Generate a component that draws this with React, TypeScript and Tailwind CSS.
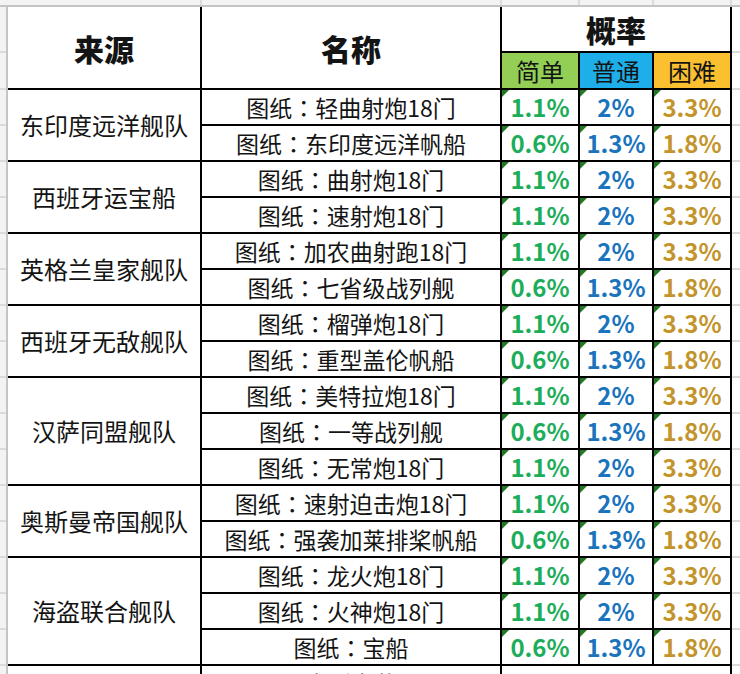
const rateA = ["1.1%", "2%", "3.3%"];
const rateB = ["0.6%", "1.3%", "1.8%"];

const groups: { name: string; items: [string, string[]][] }[] = [
  { name: "东印度远洋舰队", items: [["轻曲射炮18门", rateA], ["东印度远洋帆船", rateB]] },
  { name: "西班牙运宝船", items: [["曲射炮18门", rateA], ["速射炮18门", rateA]] },
  { name: "英格兰皇家舰队", items: [["加农曲射跑18门", rateA], ["七省级战列舰", rateB]] },
  { name: "西班牙无敌舰队", items: [["榴弹炮18门", rateA], ["重型盖伦帆船", rateB]] },
  {
    name: "汉萨同盟舰队",
    items: [
      ["美特拉炮18门", rateA],
      ["一等战列舰", rateB],
      ["无常炮18门", rateA],
    ],
  },
  { name: "奥斯曼帝国舰队", items: [["速射迫击炮18门", rateA], ["强袭加莱排桨帆船", rateB]] },
  {
    name: "海盗联合舰队",
    items: [
      ["龙火炮18门", rateA],
      ["火神炮18门", rateA],
      ["宝船", rateB],
    ],
  },
];

const valueColors = ["text-[#1cad5b]", "text-[#1a74bd]", "text-[#c3942a]"];
const rowCount = 19;

// 图纸：xxx, colon drawn centred like the sheet's font
function Blueprint({ name }: { name: string }) {
  return (
    <span>
      图纸<span className="font-['Noto_Sans_CJK_TC',sans-serif]">：</span>
      {name}
    </span>
  );
}

function Value({ text, color }: { text: string; color: string }) {
  return (
    <div className="relative flex items-center justify-center bg-white">
      <span className="absolute left-0 top-0 h-0 w-0 border-t-[7px] border-r-[7px] border-t-[#1e7b22] border-r-transparent" />
      <span className={`text-[24px] font-bold leading-none ${color}`}>{text}</span>
    </div>
  );
}

function MarginStrip({ cellClass }: { cellClass: string }) {
  return (
    <div className="grid grid-rows-[44px_35px_repeat(17,34px)] gap-[2px] bg-[#dadada]">
      {Array.from({ length: rowCount }).map((_, i) => (
        <div key={i} className={cellClass} />
      ))}
    </div>
  );
}

export default function App() {
  return (
    <div className="h-[674px] w-[740px] overflow-hidden bg-white font-['Noto_Sans_CJK_SC',sans-serif] text-[#141414]">
      {/* column header strip */}
      <div className="flex h-[7px] border-b-2 border-[#c4c4c4] bg-[#f3f3f3]">
        <div className="w-[8px]" />
        <div className="grid grid-cols-[192px_298px_76px_72px_76px_8px] gap-[2px] bg-[#dcdcdc]">
          {Array.from({ length: 6 }).map((_, i) => (
            <div key={i} className="bg-[#f3f3f3]" />
          ))}
        </div>
      </div>

      <div className="flex">
        <div className="w-[8px] border-r-2 border-[#c4c4c4]">
          <MarginStrip cellClass="bg-[#f3f3f3]" />
        </div>

        <div className="grid grid-cols-[192px_298px_76px_72px_76px] grid-rows-[44px_35px_repeat(17,34px)] gap-[2px] bg-black pr-[2px]">
          <div className="row-span-2 flex items-center justify-center bg-white text-[30px] font-black leading-none">
            来源
          </div>
          <div className="row-span-2 flex items-center justify-center bg-white text-[30px] font-black leading-none">
            名称
          </div>
          <div className="col-span-3 flex items-center justify-center bg-white text-[30px] font-black leading-none">
            概率
          </div>
          <div className="flex items-center justify-center bg-[#93cf55] text-[24px] leading-none">简单</div>
          <div className="flex items-center justify-center bg-[#1eaee9] text-[24px] leading-none">普通</div>
          <div className="flex items-center justify-center bg-[#fbc030] text-[24px] leading-none">困难</div>

          {groups.map((g) => [
            <div
              key={g.name}
              className={`flex items-center justify-center bg-white text-[24px] leading-none ${
                g.items.length === 3 ? "row-span-3" : "row-span-2"
              }`}
            >
              {g.name}
            </div>,
            ...g.items.flatMap(([label, rates], r) => [
              <div
                key={`${g.name}-${r}`}
                className="flex items-center justify-center bg-white text-[23px] leading-none"
              >
                <Blueprint name={label} />
              </div>,
              ...rates.map((v, c) => <Value key={`${g.name}-${r}-${c}`} text={v} color={valueColors[c]} />),
            ]),
          ])}

          <div className="bg-white" />
          <div className="flex items-start justify-center bg-white pt-[6px] text-[23px] leading-none">大型宝藏</div>
          <div className="col-span-3 bg-white" />
        </div>

        <div className="flex-1">
          <MarginStrip cellClass="bg-white" />
        </div>
      </div>
    </div>
  );
}
